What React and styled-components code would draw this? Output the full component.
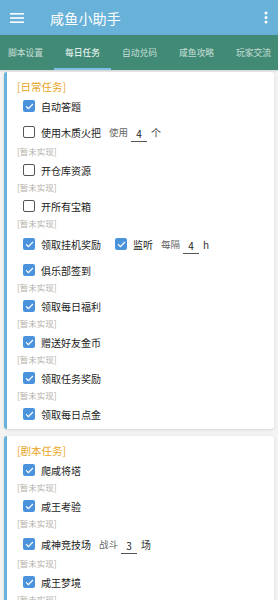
import React from "react";
import styled, { createGlobalStyle } from "styled-components";

const Global = createGlobalStyle`
  html, body { margin: 0; padding: 0; background: #f3f3f3; }
  body { font-family: "Noto Sans CJK SC", "Noto Sans", sans-serif; }
  * { box-sizing: border-box; }
`;

const Page = styled.div`
  width: 278px;
  min-height: 600px;
  background: #f3f3f3;
  overflow: hidden;
`;

const AppBar = styled.div`
  height: 35px;
  background: #68b1d8;
  display: flex;
  align-items: center;
  padding: 0 10px;
  color: #fff;
`;

const Title = styled.div`
  font-size: 14px;
  margin-left: 26px;
  flex: 1;
  line-height: 1;
  letter-spacing: 0.2px;
`;

const TabBar = styled.div`
  height: 35px;
  background: #418b76;
  display: flex;
  margin-left: -3px;
  box-shadow: 0 1px 2px rgba(0,0,0,0.15);
`;

const Tab = styled.div`
  width: 57px;
  flex: none;
  position: relative;
  display: flex;
  align-items: center;
  justify-content: center;
  font-size: 8.8px;
  color: ${(p) => (p.$active ? "#ffffff" : "rgba(255,255,255,0.72)")};
  &::after {
    content: "";
    display: ${(p) => (p.$active ? "block" : "none")};
    position: absolute;
    left: 0;
    right: 0;
    bottom: 0;
    height: 2px;
    background: #7cc0e6;
  }
`;

const Content = styled.div`
  padding: 2px 4px 0 4px;
  display: flex;
  flex-direction: column;
  gap: 7px;
`;

const Card = styled.div`
  background: #fff;
  border-left: 3px solid #68b1d8;
  border-radius: 3px;
  box-shadow: 0 1px 3px rgba(0,0,0,0.12);
  padding: 8px 0 3px 10px;
  display: flex;
  flex-direction: column;
`;

const Header = styled.div`
  height: 14px;
  line-height: 14px;
  font-size: 10.5px;
  color: #e8a423;
`;

const Row = styled.div`
  height: ${(p) => (p.$tall ? "28px" : "24px")};
  display: flex;
  align-items: center;
  padding-left: 6px;
`;

const Note = styled.div`
  height: 12px;
  line-height: 11px;
  font-size: 8.5px;
  color: #b4b0a8;
`;

const Box = styled.span`
  width: 12px;
  height: 12px;
  border-radius: 2px;
  flex: none;
  display: inline-flex;
  align-items: center;
  justify-content: center;
  background: ${(p) => (p.$on ? "#4a93dc" : "#fff")};
  border: ${(p) => (p.$on ? "none" : "1.5px solid #555")};
`;

const Label = styled.span`
  font-size: 10px;
  color: #222;
  margin-left: 6px;
  margin-right: ${(p) => p.$mr || 0}px;
`;

const Hint = styled.span`
  font-size: 9.5px;
  color: #666;
`;

const Field = styled.span`
  width: 16px;
  margin: 0 4px 0 3px;
  text-align: center;
  font-size: 10px;
  color: #222;
  border-bottom: 1px solid #555;
  line-height: 13px;
  padding-bottom: 1px;
  margin-top: 4px;
`;

const Unit = styled.span`
  font-size: 10px;
  color: #333;
`;

const Check = ({ on }) => (
  <Box $on={on}>
    {on && (
      <svg width="9" height="9" viewBox="0 0 24 24" fill="none" stroke="#fff" strokeWidth="3.2" strokeLinecap="square">
        <path d="M4 12.5l5 5L20 6.5" />
      </svg>
    )}
  </Box>
);

const Item = ({ on, label, hint, value, unit, mr }) => (
  <Row $tall={!!hint}>
    <Check on={on} />
    <Label $mr={mr ?? 8}>{label}</Label>
    {hint && (
      <>
        <Hint>{hint}</Hint>
        <Field>{value}</Field>
        <Unit>{unit}</Unit>
      </>
    )}
  </Row>
);

const Menu = () => (
  <svg width="14" height="12" viewBox="0 0 14 12">
    <rect x="0" y="1" width="14" height="1.6" fill="#fff" />
    <rect x="0" y="5.2" width="14" height="1.6" fill="#fff" />
    <rect x="0" y="9.4" width="14" height="1.6" fill="#fff" />
  </svg>
);

const Dots = () => (
  <svg width="4" height="13" viewBox="0 0 4 13">
    <circle cx="2" cy="2" r="1.5" fill="#fff" />
    <circle cx="2" cy="6.5" r="1.5" fill="#fff" />
    <circle cx="2" cy="11" r="1.5" fill="#fff" />
  </svg>
);

const Monitor = styled.div`
  display: flex;
  align-items: center;
  margin-left: 0px;
`;

const NOTE = "[暂未实现]";

export default function App() {
  return (
    <Page>
      <Global />
      <AppBar>
        <Menu />
        <Title>咸鱼小助手</Title>
        <Dots />
      </AppBar>
      <TabBar>
        <Tab>脚本设置</Tab>
        <Tab $active>每日任务</Tab>
        <Tab>自动兑码</Tab>
        <Tab>咸鱼攻略</Tab>
        <Tab>玩家交流</Tab>
      </TabBar>
      <Content>
        <Card>
          <Header>[日常任务]</Header>
          <Item on label="自动答题" />
          <Item label="使用木质火把" hint="使用" value="4" unit="个" />
          <Note>{NOTE}</Note>
          <Item label="开仓库资源" />
          <Note>{NOTE}</Note>
          <Item label="开所有宝箱" />
          <Note>{NOTE}</Note>
          <Row $tall>
            <Check on />
            <Label $mr={14}>领取挂机奖励</Label>
            <Monitor>
              <Check on />
              <Label $mr={8}>监听</Label>
              <Hint>每隔</Hint>
              <Field>4</Field>
              <Unit>h</Unit>
            </Monitor>
          </Row>
          <Item on label="俱乐部签到" />
          <Note>{NOTE}</Note>
          <Item on label="领取每日福利" />
          <Note>{NOTE}</Note>
          <Item on label="赠送好友金币" />
          <Note>{NOTE}</Note>
          <Item on label="领取任务奖励" />
          <Note>{NOTE}</Note>
          <Item on label="领取每日点金" />
        </Card>
        <Card>
          <Header>[剧本任务]</Header>
          <Item on label="爬咸将塔" />
          <Note>{NOTE}</Note>
          <Item on label="咸王考验" />
          <Note>{NOTE}</Note>
          <Item on label="咸神竞技场" hint="战斗" value="3" unit="场" />
          <Note>{NOTE}</Note>
          <Item on label="咸王梦境" />
          <Note>{NOTE}</Note>
        </Card>
      </Content>
    </Page>
  );
}
